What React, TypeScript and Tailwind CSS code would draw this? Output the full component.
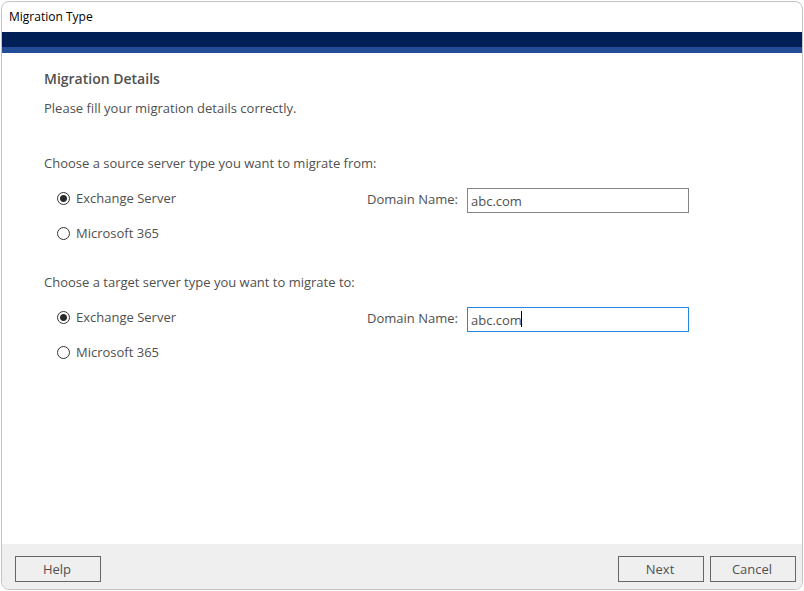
import { useState } from "react";

const SERVER_TYPES = ["Exchange Server", "Microsoft 365"];

type ServerSectionProps = {
  name: string;
  legend: string;
  focused?: boolean;
};

function ServerSection({ name, legend, focused = false }: ServerSectionProps) {
  const [serverType, setServerType] = useState(SERVER_TYPES[0]);
  const [domain, setDomain] = useState("abc.com");

  return (
    <fieldset>
      <legend>{legend}</legend>
      <div className="mt-[15px] grid grid-cols-[323px_100px_minmax(0,222px)] items-start">
        <div className="flex flex-col items-start gap-[15px] pl-[13px]">
          {SERVER_TYPES.map((type) => (
            <label key={type} className="flex items-center gap-1.5">
              <input
                type="radio"
                name={name}
                value={type}
                checked={serverType === type}
                onChange={() => setServerType(type)}
                className="size-[13px] appearance-none rounded-full border border-[#333] bg-white checked:bg-[radial-gradient(circle,#2b2b2b_3px,#fff_4px)]"
              />
              {type}
            </label>
          ))}
        </div>
        <label htmlFor={`${name}-domain`} className="pt-px">
          Domain Name:
        </label>
        <div className="relative">
          <input
            id={`${name}-domain`}
            type="text"
            value={domain}
            onChange={(e) => setDomain(e.target.value)}
            className={`block h-[25px] w-full border bg-white px-[3px] outline-none ${
              focused ? "border-[#2488de]" : "border-[#858585]"
            }`}
          />
          {focused && (
            <span className="absolute top-1 left-[54px] h-4 w-px bg-black" />
          )}
        </div>
      </div>
    </fieldset>
  );
}

function DialogButton({ label }: { label: string }) {
  return (
    <button
      type="button"
      className="h-[26px] w-[86px] border border-[#666] bg-[#efefef] pr-0.5 text-center"
    >
      {label}
    </button>
  );
}

export default function App() {
  return (
    <div className="flex min-h-screen flex-col bg-white p-px font-['Open_Sans','Noto_Sans',sans-serif] text-[13px] leading-5 text-[#505050]">
      <div className="flex flex-1 flex-col overflow-hidden rounded-lg border border-[#c3c3c3] bg-white">
        {/* Title bar */}
        <header>
          <h1 className="px-[7px] py-[5px] text-[12px] text-black">Migration Type</h1>
          <div className="h-[15px] bg-[#001f57]" />
          <div className="h-1.5 bg-[#234d97]" />
        </header>

        <main className="flex-1 px-[42px] pt-4 pb-8">
          <h2 className="text-[14px] font-semibold text-[#505050]">Migration Details</h2>
          <p className="mt-[9px]">Please fill your migration details correctly.</p>

          <div className="mt-[35px] flex flex-col gap-[29px]">
            <ServerSection
              name="source"
              legend="Choose a source server type you want to migrate from:"
            />
            <ServerSection
              name="target"
              legend="Choose a target server type you want to migrate to:"
              focused
            />
          </div>
        </main>

        {/* Wizard actions */}
        <footer className="flex justify-between bg-[#efefef] pt-3 pr-1.5 pb-[7px] pl-[13px]">
          <DialogButton label="Help" />
          <div className="flex gap-1.5">
            <DialogButton label="Next" />
            <DialogButton label="Cancel" />
          </div>
        </footer>
      </div>
    </div>
  );
}
